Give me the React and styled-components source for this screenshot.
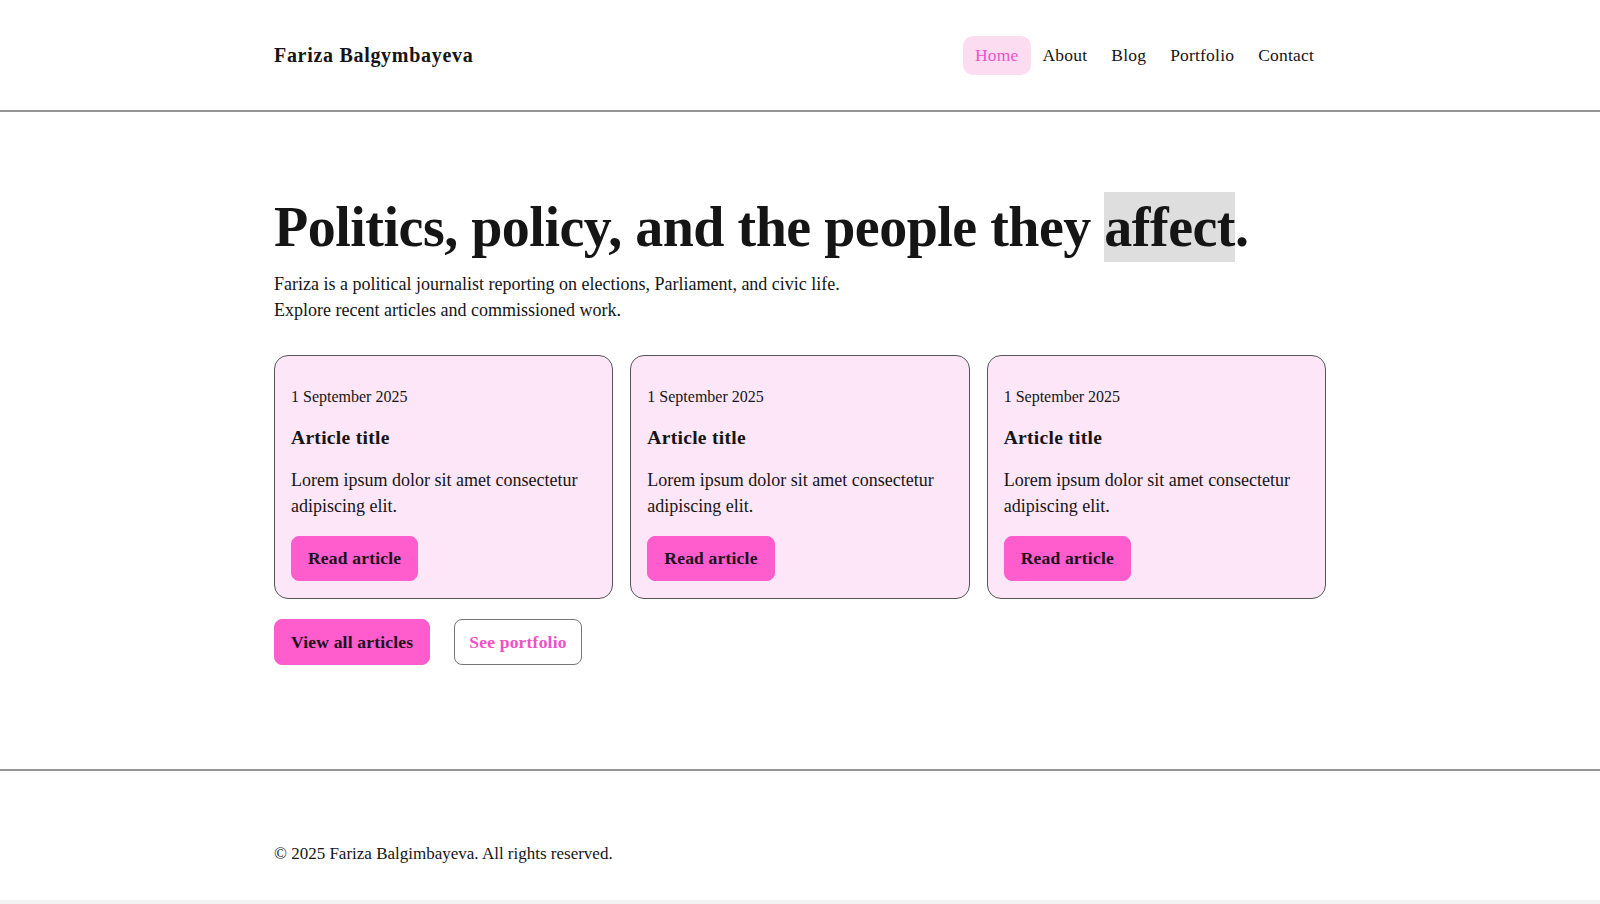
import React from 'react';
import styled, { createGlobalStyle } from 'styled-components';

const GlobalStyle = createGlobalStyle`
  html { background: #f3f3f3; }
  body {
    margin: 0;
    background: #ffffff;
    font-family: "Liberation Serif", "Times New Roman", serif;
    color: #151515;
  }
  * { box-sizing: border-box; }
`;

const pink = '#ff5ccd';

const Header = styled.header`
  height: 112px;
  border-bottom: 2px solid #959595;
  display: flex;
  align-items: center;
`;

const Wrap = styled.div`
  width: 1052px;
  margin: 0 auto;
`;

const HeaderInner = styled(Wrap)`
  display: flex;
  align-items: center;
  justify-content: space-between;
`;

const Logo = styled.a`
  font-size: 20px;
  font-weight: 700;
  letter-spacing: 0.7px;
  color: #151515;
  text-decoration: none;
`;

const Nav = styled.nav`
  display: flex;
  align-items: center;
`;

const NavItem = styled.a`
  font-size: 17.5px;
  padding: 9px 12px;
  border-radius: 10px;
  line-height: 21px;
  letter-spacing: 0.2px;
  text-decoration: none;
  color: ${p => (p.$active ? '#ef52c5' : '#151515')};
  background: ${p => (p.$active ? '#fcdcf0' : 'transparent')};
`;

const Main = styled.main`
  padding: 79px 0 104px;
`;

const Title = styled.h1`
  margin: 0;
  font-size: 56px;
  line-height: 72px;
  font-weight: 700;
  letter-spacing: -0.5px;
`;

const Mark = styled.span`
  background: #dedede;
  padding: 4px 0;
`;

const Lead = styled.p`
  margin: 8px 0 0;
  font-size: 18px;
  line-height: 26px;
`;

const Cards = styled.div`
  margin-top: 32px;
  display: grid;
  grid-template-columns: repeat(3, 1fr);
  gap: 17px;
`;

const Card = styled.article`
  background: #fde6f8;
  border: 1px solid #555;
  border-radius: 14px;
  padding: 29px 16px 17px;
`;

const CardDate = styled.div`
  font-size: 16px;
  line-height: 24px;
`;

const CardTitle = styled.h3`
  margin: 15px 0 0;
  font-size: 19.5px;
  line-height: 28px;
  font-weight: 700;
  letter-spacing: 0.3px;
`;

const CardText = styled.p`
  margin: 15px 0 0;
  font-size: 18px;
  line-height: 26px;
`;

const Button = styled.a`
  display: inline-flex;
  align-items: center;
  justify-content: center;
  height: ${p => p.$h || 45}px;
  padding: 0 ${p => (p.$outline ? 14 : 16)}px;
  border-radius: 8px;
  font-size: 17.5px;
  font-weight: 700;
  letter-spacing: 0.2px;
  text-decoration: none;
  background: ${p => (p.$outline ? '#fff' : pink)};
  color: ${p => (p.$outline ? '#ef52c5' : '#1a1020')};
  border: 1px solid ${p => (p.$outline ? '#777' : pink)};
`;

const CardButton = styled(Button)`
  margin-top: 17px;
`;

const Actions = styled.div`
  display: flex;
  gap: 24px;
  margin-top: 20px;
`;

const Footer = styled.footer`
  border-top: 2px solid #959595;
  height: 131px;
  display: flex;
  align-items: center;
  padding-top: 36px;
`;

const Copy = styled.p`
  margin: 0;
  font-size: 17px;
`;

const articles = [1, 2, 3];

export default function App() {
  return (
    <>
      <GlobalStyle />
      <Header>
        <HeaderInner>
          <Logo href="#">Fariza Balgymbayeva</Logo>
          <Nav>
            <NavItem $active href="#">Home</NavItem>
            <NavItem href="#">About</NavItem>
            <NavItem href="#">Blog</NavItem>
            <NavItem href="#">Portfolio</NavItem>
            <NavItem href="#">Contact</NavItem>
          </Nav>
        </HeaderInner>
      </Header>
      <Main>
        <Wrap>
          <Title>Politics, policy, and the people they <Mark>affect</Mark>.</Title>
          <Lead>
            Fariza is a political journalist reporting on elections, Parliament, and civic life.
            <br />
            Explore recent articles and commissioned work.
          </Lead>
          <Cards>
            {articles.map(i => (
              <Card key={i}>
                <CardDate>1 September 2025</CardDate>
                <CardTitle>Article title</CardTitle>
                <CardText>Lorem ipsum dolor sit amet consectetur adipiscing elit.</CardText>
                <CardButton href="#">Read article</CardButton>
              </Card>
            ))}
          </Cards>
          <Actions>
            <Button $h={46} href="#">View all articles</Button>
            <Button $h={46} $outline href="#">See portfolio</Button>
          </Actions>
        </Wrap>
      </Main>
      <Footer>
        <Wrap>
          <Copy>© 2025 Fariza Balgimbayeva. All rights reserved.</Copy>
        </Wrap>
      </Footer>
    </>
  );
}
